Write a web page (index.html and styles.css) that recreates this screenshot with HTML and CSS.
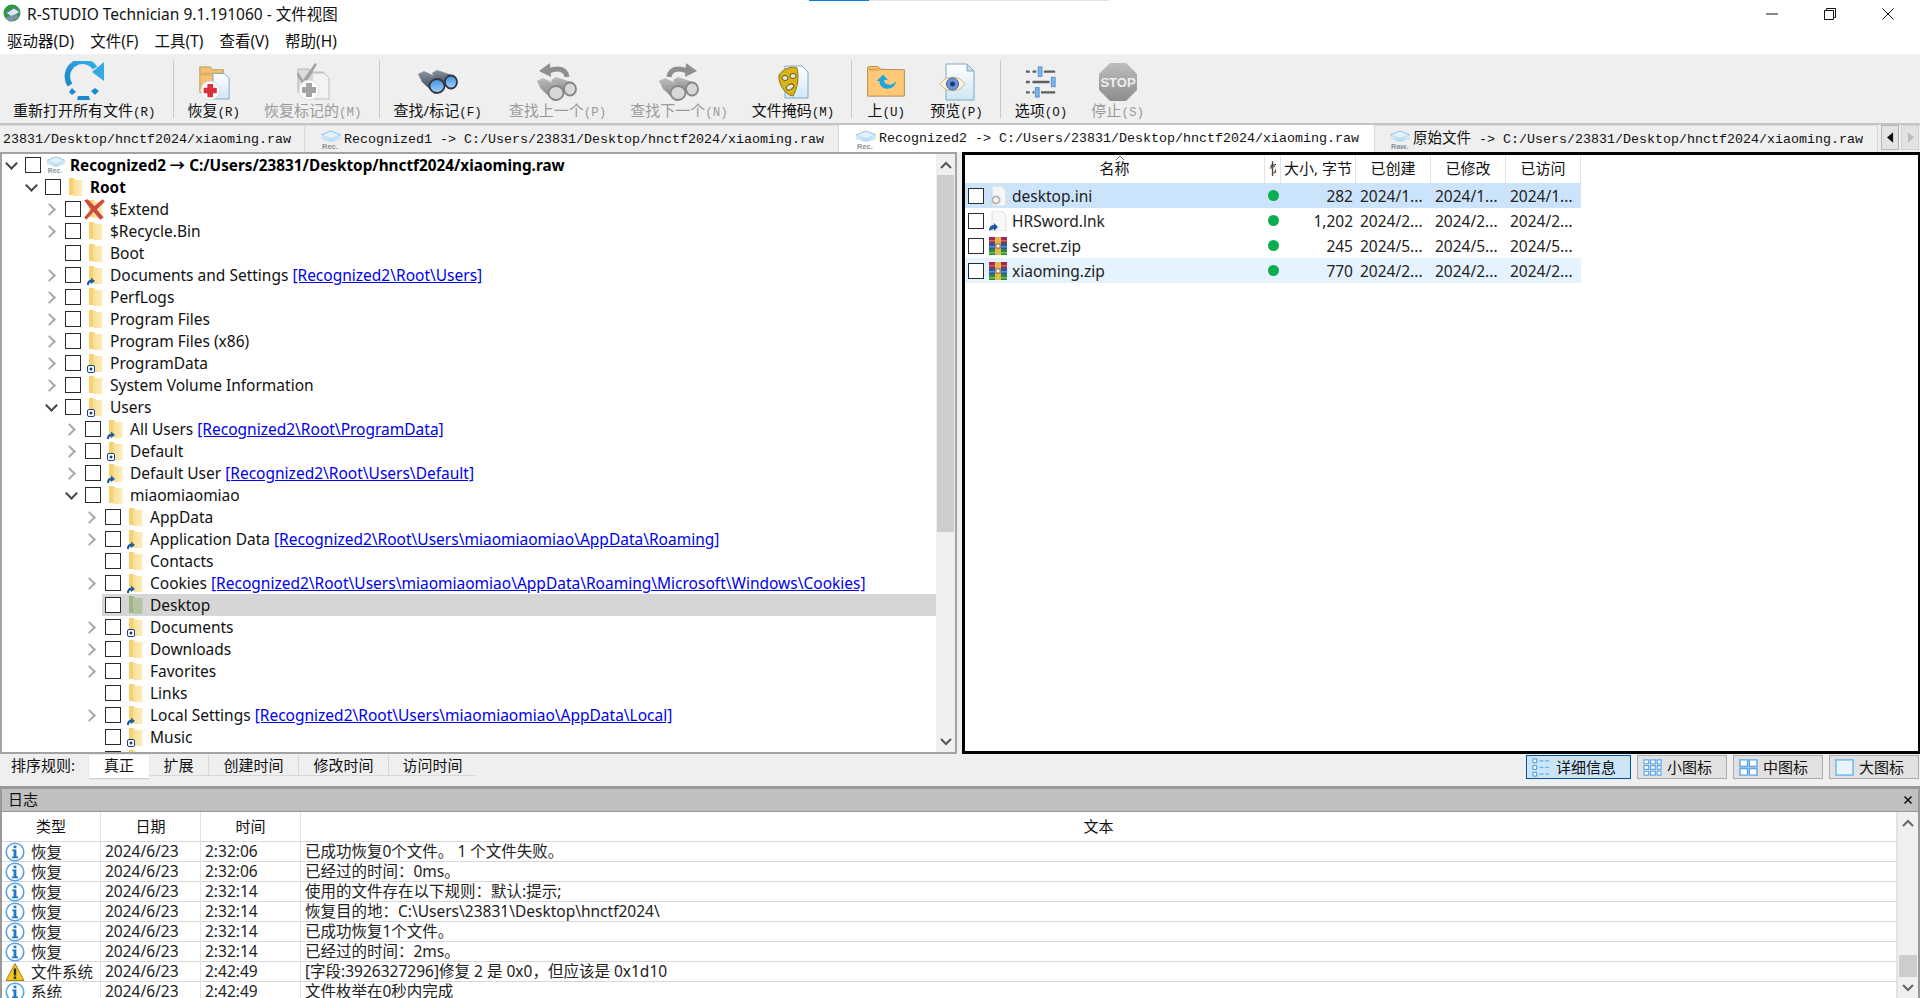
FILE: index.html
```html
<!DOCTYPE html>
<html lang="zh-CN">
<head>
<meta charset="utf-8">
<title>R-STUDIO Technician</title>
<link rel="stylesheet" href="styles.css">
</head>
<body>
<svg class="sprite" aria-hidden="true">
  <defs>
    <linearGradient id="gFolder" x1="0" y1="0" x2="1" y2="0"><stop offset="0" stop-color="#f8d67c"/><stop offset="1" stop-color="#fdeec0"/></linearGradient>
    <linearGradient id="gDoc" x1="0" y1="0" x2="0" y2="1"><stop offset="0" stop-color="#ffffff"/><stop offset="1" stop-color="#cfe6f5"/></linearGradient>
    <linearGradient id="gGrey" x1="0" y1="0" x2="0" y2="1"><stop offset="0" stop-color="#bdbdbd"/><stop offset="1" stop-color="#8d8d8d"/></linearGradient>
    <linearGradient id="gBlue" x1="0" y1="1" x2="1" y2="0"><stop offset="0" stop-color="#1a86c8"/><stop offset="1" stop-color="#35b0e8"/></linearGradient>
    <linearGradient id="gBarrel" x1="0" y1="0" x2="0" y2="1"><stop offset="0" stop-color="#8a96a3"/><stop offset="1" stop-color="#2f3844"/></linearGradient>
    <linearGradient id="gLens" x1="0" y1="0" x2="0" y2="1"><stop offset="0" stop-color="#3f8fe0"/><stop offset="1" stop-color="#a4d4fa"/></linearGradient>
    <linearGradient id="gBarrelG" x1="0" y1="0" x2="0" y2="1"><stop offset="0" stop-color="#bcbcbc"/><stop offset="1" stop-color="#7e7e7e"/></linearGradient>
    <linearGradient id="gDrive" x1="0" y1="0" x2="0" y2="1"><stop offset="0" stop-color="#e8f4fc"/><stop offset="1" stop-color="#a9d4f0"/></linearGradient>
    <symbol id="folder" viewBox="0 0 20 20"><path d="M3 1h5l2 2h6.500v16H8l-1-1H3z" fill="url(#gFolder)"/><path d="M3 1h4v17H3z" fill="#f6d170"/></symbol>
    <symbol id="folderGrey" viewBox="0 0 20 20"><path d="M3 1h5l2 2h6.500v16H8l-1-1H3z" fill="#b4c4a0"/><path d="M3 1h4v17H3z" fill="#a0b48c"/></symbol>
    <symbol id="link" viewBox="0 0 8 8"><path d="M0 8c0-3 1-5 4-5V.500l4 3.500-4 3V5.500C2 5.500 2 7 2 8z" fill="#1d5ba6"/></symbol>
    <symbol id="junction" viewBox="0 0 8 8"><rect x=".5" y=".5" width="7" height="7" rx="1.500" fill="#fff" stroke="#1d3f8f"/><circle cx="4" cy="4" r="1.500" fill="#1d3f8f"/></symbol>
    <symbol id="rec" viewBox="0 0 22 20"><path d="M1 5l10-4 10 4-10 4z" fill="#e4f2fc" stroke="#8cc3e8"/><path d="M1 5v4l10 3 10-3V5l-10 4z" fill="url(#gDrive)"/><text x="2" y="19" class="drive-txt">Rec.</text></symbol>
    <symbol id="raw" viewBox="0 0 22 20"><path d="M1 5l10-4 10 4-10 4z" fill="#e4f2fc" stroke="#8cc3e8"/><path d="M1 5v4l10 3 10-3V5l-10 4z" fill="url(#gDrive)"/><text x="2" y="19" class="drive-txt">Raw.</text></symbol>
    <symbol id="rar" viewBox="0 0 20 18"><rect x="1" y="0" width="18" height="6" fill="#a5255c"/><rect x="1" y="6" width="18" height="6" fill="#2c54a8"/><rect x="1" y="12" width="18" height="6" fill="#2d8a3a"/><rect x="1" y="3" width="18" height="1.500" fill="#d06a3f"/><rect x="1" y="9" width="18" height="1.500" fill="#5b8ae0"/><rect x="1" y="15" width="18" height="1.500" fill="#6fc05a"/><rect x="7" y="0" width="6" height="18" fill="#e2b94f"/><rect x="8" y="7" width="4" height="4" fill="#fff" stroke="#7a4a20" stroke-width=".8"/></symbol>
    <symbol id="info" viewBox="0 0 20 20"><circle cx="10" cy="10" r="8.800" fill="#fff" stroke="#5aa3e0" stroke-width="1.600"/><rect x="8.600" y="3.600" width="2.800" height="2.600" fill="#1f78c8"/><path d="M7.200 7.600h4.200v7h1.600v1.600H7v-1.600h1.600V9.200H7.200z" fill="#1f78c8"/></symbol>
    <symbol id="warn" viewBox="0 0 20 20"><path d="M10 1.500L19 18.500H1z" fill="#f4c520" stroke="#a8821a" stroke-linejoin="round"/><rect x="8.800" y="6.500" width="2.400" height="7" fill="#2a2a2a"/><rect x="8.800" y="14.500" width="2.400" height="2.400" fill="#2a2a2a"/></symbol>
    <symbol id="bino" viewBox="0 0 40 24"><path d="M14 3l5-3 18 6-6 12-12-6z" fill="url(#gBarrel)"/><ellipse cx="33" cy="12" rx="6" ry="6.500" fill="url(#gLens)" stroke="#2f3844" stroke-width="1.800"/><path d="M0 4l6-3 17 8-6 15L4 12z" fill="url(#gBarrel)"/><ellipse cx="19" cy="16" rx="7.500" ry="7" fill="url(#gLens)" stroke="#2f3844" stroke-width="1.800"/></symbol>
    <symbol id="binoGrey" viewBox="0 0 40 24"><path d="M14 3l5-3 18 6-6 12-12-6z" fill="url(#gBarrelG)"/><ellipse cx="33" cy="12" rx="6" ry="6.500" fill="#d8d8d8" stroke="#868686" stroke-width="1.800"/><path d="M0 4l6-3 17 8-6 15L4 12z" fill="url(#gBarrelG)"/><ellipse cx="19" cy="16" rx="7.500" ry="7" fill="#d8d8d8" stroke="#868686" stroke-width="1.800"/></symbol>
  </defs>
</svg>

<header class="titlebar">
  <svg class="app-icon" viewBox="0 0 20 20"><circle cx="10" cy="9" r="8.500" fill="#2f9a3f"/><path d="M4 9l8-5 6 4-8 5z" fill="#d8e8f4" stroke="#5b7a9a"/><path d="M3 14l11-4 3 3-9 5z" fill="#7f94a8"/></svg>
  <span class="title-text">R-STUDIO Technician 9.1.191060 - 文件视图</span>
  <div class="win-btns">
    <svg class="win-btn" viewBox="0 0 12 12"><path d="M0 6h12" stroke="#111"/></svg>
    <svg class="win-btn" viewBox="0 0 12 12"><path d="M.5 2.500h9v9h-9zM2.500 2.500v-2h9v9h-2" fill="none" stroke="#111"/></svg>
    <svg class="win-btn" viewBox="0 0 12 12"><path d="M.5.5l11 11M11.500.5l-11 11" stroke="#111"/></svg>
  </div>
  <div class="top-strip"><span class="strip-blue"></span></div>
</header>

<nav class="menubar">
  <span>驱动器(D)</span><span>文件(F)</span><span>工具(T)</span><span>查看(V)</span><span>帮助(H)</span>
</nav>

<div class="toolbar">
  <div class="tbtn">
    <svg class="ti ti-big" width="44" height="40" viewBox="0 2 44 40"><path d="M8 26A15 15 0 0 1 33 9" fill="none" stroke="url(#gBlue)" stroke-width="5.500"/><path d="M42 3v19L30 13z" fill="#35a8e4"/><path d="M10 29l4 4-4 3-3-3zM33 29l4 3-4 4-4-4zM16 37h11l1 4H15z" fill="#1c8ad0"/></svg>
    <span class="tl">重新打开所有文件<i>(R)</i></span>
  </div>
  <span class="tsep"></span>
  <div class="tbtn">
    <svg class="ti" width="34" height="35" viewBox="0 0 36 37"><path d="M3 2h11l2 3h12v24H3z" fill="#f2c271" stroke="#b99859"/><path d="M3 8h25v3H3z" fill="#e0b060"/><path d="M17 9h12l5 5v22H17z" fill="url(#gDoc)" stroke="#7fa8c4"/><circle cx="14" cy="27" r="10" fill="#fff" stroke="#cfd8dc"/><path d="M11 20h6v4h4v6h-4v4h-6v-4H7v-6h4z" fill="#d8323c"/></svg>
    <span class="tl">恢复<i>(R)</i></span>
  </div>
  <div class="tbtn off">
    <svg class="ti" width="36" height="38" viewBox="0 0 36 38"><path d="M3 6h11l2 3h12v20H3z" fill="#dcdcdc" stroke="#b5b5b5"/><path d="M3 9l5 8L20 0l2 1L9 24 2 12z" fill="#a2a2a2"/><path d="M17 10h12l5 5v21H17z" fill="#f3f3f3" stroke="#bdbdbd"/><circle cx="14" cy="27" r="10" fill="#fff" stroke="#dcdcdc"/><path d="M11 20h6v4h4v6h-4v4h-6v-4H7v-6h4z" fill="#a3a3a3"/></svg>
    <span class="tl">恢复标记的<i>(M)</i></span>
  </div>
  <span class="tsep"></span>
  <div class="tbtn">
    <svg class="ti" width="40" height="24" viewBox="0 0 40 24"><use href="#bino" width="40" height="24"/></svg>
    <span class="tl">查找/标记<i>(F)</i></span>
  </div>
  <div class="tbtn off tb-shift">
    <svg class="ti" width="40" height="38" viewBox="0 0 40 38"><path d="M30 14C29 6 21 4 12 8" fill="none" stroke="#8f8f8f" stroke-width="5"/><path d="M2 8l11-8 1 14z" fill="#8f8f8f"/><use href="#binoGrey" y="14" width="40" height="24"/></svg>
    <span class="tl">查找上一个<i>(P)</i></span>
  </div>
  <div class="tbtn off">
    <svg class="ti" width="40" height="38" viewBox="0 0 40 38"><path d="M10 14C11 6 19 4 28 8" fill="none" stroke="#8f8f8f" stroke-width="5"/><path d="M38 8L27 0l-1 14z" fill="#8f8f8f"/><use href="#binoGrey" y="14" width="40" height="24"/></svg>
    <span class="tl">查找下一个<i>(N)</i></span>
  </div>
  <div class="tbtn">
    <svg class="ti" width="34" height="34" viewBox="0 0 34 34"><path d="M9 1h17l6 6v26H9z" fill="url(#gDoc)" stroke="#7fa8c4"/><path d="M3 10C8 3 15 1 21 3c2 9 1 19-4 28C10 30 2 20 3 10z" fill="#d8b418" stroke="#8a7410"/><ellipse cx="9" cy="13" rx="3" ry="2.500" fill="#e6e6e6" stroke="#6a5a10"/><ellipse cx="17" cy="11" rx="3" ry="2.500" fill="#e6e6e6" stroke="#6a5a10"/><ellipse cx="14" cy="22" rx="4" ry="2.500" transform="rotate(-30 14 22)" fill="#e6e6e6" stroke="#6a5a10"/></svg>
    <span class="tl">文件掩码<i>(M)</i></span>
  </div>
  <span class="tsep"></span>
  <div class="tbtn">
    <svg class="ti" width="40" height="32" viewBox="0 0 40 34"><path d="M.5 2.500a2 2 0 0 1 2-2h9l3 3 25 .5v28H.5z" fill="#ffc877" stroke="#a9874f"/><path d="M2 2h11l2 3H1z" fill="#e9a95a"/><path d="M10 16l7-7 5 6h-4c0 3 2 5 6 5 3 0 5-2 7-4-1 6-6 9-12 8-4-1-6-4-6-8z" fill="#21a6dc"/></svg>
    <span class="tl">上<i>(U)</i></span>
  </div>
  <div class="tbtn">
    <svg class="ti" width="36" height="38" viewBox="0 0 36 38"><path d="M7 1h21l7 7v29H7z" fill="url(#gDoc)" stroke="#7fa8c4"/><path d="M28 1v7h7z" fill="#c9dce8" stroke="#7fa8c4"/><path d="M1 21c6-9 19-9 25 0-6 9-19 9-25 0z" fill="#f8f2de" stroke="#c9b886"/><circle cx="13.500" cy="21" r="6" fill="#6f95d8" stroke="#3f5f9f"/><circle cx="13.500" cy="21" r="2.500" fill="#1f3a78"/></svg>
    <span class="tl">预览<i>(P)</i></span>
  </div>
  <span class="tsep"></span>
  <div class="tbtn">
    <svg class="ti" width="36" height="32" viewBox="0 0 36 34"><path d="M2 6h4M9 6h4M21 6h12M2 17h4M9 17h18M2 28h4M9 28h2M18 28h15" stroke="#5f5f5f" stroke-width="2.500" fill="none"/><rect x="15" y="1" width="4" height="10" fill="#7cb8ef" stroke="#4f8fcc"/><rect x="29" y="12" width="4" height="10" fill="#7cb8ef" stroke="#4f8fcc"/><rect x="12" y="23" width="4" height="10" fill="#7cb8ef" stroke="#4f8fcc"/></svg>
    <span class="tl">选项<i>(O)</i></span>
  </div>
  <div class="tbtn off">
    <svg class="ti" width="38" height="38" viewBox="0 0 38 38"><path d="M11 0h16l11 11v16L27 38H11L0 27V11z" fill="url(#gGrey)"/><text x="19" y="24" class="stop-txt">STOP</text></svg>
    <span class="tl">停止<i>(S)</i></span>
  </div>
</div>

<div class="tabs">
  <div class="tab tab-a"><span class="tab-text">23831/Desktop/hnctf2024/xiaoming.raw</span></div>
  <div class="tab tab-b"><svg class="tab-ic"><use href="#rec"/></svg><span class="tab-text">Recognized1 -&gt; C:/Users/23831/Desktop/hnctf2024/xiaoming.raw</span></div>
  <div class="tab tab-c on"><svg class="tab-ic"><use href="#rec"/></svg><span class="tab-text">Recognized2 -&gt; C:/Users/23831/Desktop/hnctf2024/xiaoming.raw</span></div>
  <div class="tab tab-d"><svg class="tab-ic"><use href="#raw"/></svg><span class="tab-text"><b class="tab-cjk">原始文件</b> -&gt; C:/Users/23831/Desktop/hnctf2024/xiaoming.raw</span></div>
  <div class="tab-scroll"><span class="ts-btn"><svg viewBox="0 0 8 12" class="ts-ar"><path d="M7 0v12L0 6z" fill="#111"/></svg></span><span class="ts-btn dim"><svg viewBox="0 0 8 12" class="ts-ar"><path d="M1 0v12l7-6z" fill="#bbb"/></svg></span></div>
</div>

<div class="panes">
  <section class="tree-pane">
    <div class="tree">
      <div class="row l0 bold"><span class="tw down"></span><span class="cb"></span><svg class="ic"><use href="#rec"/></svg><span>Recognized2 → C:/Users/23831/Desktop/hnctf2024/xiaoming.raw</span></div>
      <div class="row l1 bold"><span class="tw down"></span><span class="cb"></span><svg class="ic"><use href="#folder"/></svg><span>Root</span></div>
      <div class="row l2"><span class="tw right"></span><span class="cb"></span><span class="icw"><svg class="ic"><use href="#folder"/></svg><svg class="xmark" viewBox="0 0 20 20"><path d="M1 2l3-1 6 6 7-6 2 2-7 7 6 7-3 2-6-7-6 7-2-2 6-7z" fill="#cc4a3e"/></svg></span><span>$Extend</span></div>
      <div class="row l2"><span class="tw right"></span><span class="cb"></span><svg class="ic"><use href="#folder"/></svg><span>$Recycle.Bin</span></div>
      <div class="row l2"><span class="tw"></span><span class="cb"></span><svg class="ic"><use href="#folder"/></svg><span>Boot</span></div>
      <div class="row l2"><span class="tw right"></span><span class="cb"></span><span class="icw"><svg class="ic"><use href="#folder"/></svg><svg class="ov"><use href="#link"/></svg></span><span>Documents and Settings</span><a class="lnk">[Recognized2\Root\Users]</a></div>
      <div class="row l2"><span class="tw right"></span><span class="cb"></span><svg class="ic"><use href="#folder"/></svg><span>PerfLogs</span></div>
      <div class="row l2"><span class="tw right"></span><span class="cb"></span><svg class="ic"><use href="#folder"/></svg><span>Program Files</span></div>
      <div class="row l2"><span class="tw right"></span><span class="cb"></span><svg class="ic"><use href="#folder"/></svg><span>Program Files (x86)</span></div>
      <div class="row l2"><span class="tw right"></span><span class="cb"></span><span class="icw"><svg class="ic"><use href="#folder"/></svg><svg class="ov"><use href="#junction"/></svg></span><span>ProgramData</span></div>
      <div class="row l2"><span class="tw right"></span><span class="cb"></span><svg class="ic"><use href="#folder"/></svg><span>System Volume Information</span></div>
      <div class="row l2"><span class="tw down"></span><span class="cb"></span><span class="icw"><svg class="ic"><use href="#folder"/></svg><svg class="ov"><use href="#junction"/></svg></span><span>Users</span></div>
      <div class="row l3"><span class="tw right"></span><span class="cb"></span><span class="icw"><svg class="ic"><use href="#folder"/></svg><svg class="ov"><use href="#link"/></svg></span><span>All Users</span><a class="lnk">[Recognized2\Root\ProgramData]</a></div>
      <div class="row l3"><span class="tw right"></span><span class="cb"></span><span class="icw"><svg class="ic"><use href="#folder"/></svg><svg class="ov"><use href="#junction"/></svg></span><span>Default</span></div>
      <div class="row l3"><span class="tw right"></span><span class="cb"></span><span class="icw"><svg class="ic"><use href="#folder"/></svg><svg class="ov"><use href="#link"/></svg></span><span>Default User</span><a class="lnk">[Recognized2\Root\Users\Default]</a></div>
      <div class="row l3"><span class="tw down"></span><span class="cb"></span><svg class="ic"><use href="#folder"/></svg><span>miaomiaomiao</span></div>
      <div class="row l4"><span class="tw right"></span><span class="cb"></span><svg class="ic"><use href="#folder"/></svg><span>AppData</span></div>
      <div class="row l4"><span class="tw right"></span><span class="cb"></span><span class="icw"><svg class="ic"><use href="#folder"/></svg><svg class="ov"><use href="#link"/></svg></span><span>Application Data</span><a class="lnk">[Recognized2\Root\Users\miaomiaomiao\AppData\Roaming]</a></div>
      <div class="row l4"><span class="tw"></span><span class="cb"></span><svg class="ic"><use href="#folder"/></svg><span>Contacts</span></div>
      <div class="row l4"><span class="tw right"></span><span class="cb"></span><span class="icw"><svg class="ic"><use href="#folder"/></svg><svg class="ov"><use href="#link"/></svg></span><span>Cookies</span><a class="lnk">[Recognized2\Root\Users\miaomiaomiao\AppData\Roaming\Microsoft\Windows\Cookies]</a></div>
      <div class="row l4 sel"><span class="cb"></span><svg class="ic"><use href="#folderGrey"/></svg><span>Desktop</span></div>
      <div class="row l4"><span class="tw right"></span><span class="cb"></span><span class="icw"><svg class="ic"><use href="#folder"/></svg><svg class="ov"><use href="#junction"/></svg></span><span>Documents</span></div>
      <div class="row l4"><span class="tw right"></span><span class="cb"></span><svg class="ic"><use href="#folder"/></svg><span>Downloads</span></div>
      <div class="row l4"><span class="tw right"></span><span class="cb"></span><svg class="ic"><use href="#folder"/></svg><span>Favorites</span></div>
      <div class="row l4"><span class="tw"></span><span class="cb"></span><svg class="ic"><use href="#folder"/></svg><span>Links</span></div>
      <div class="row l4"><span class="tw right"></span><span class="cb"></span><span class="icw"><svg class="ic"><use href="#folder"/></svg><svg class="ov"><use href="#link"/></svg></span><span>Local Settings</span><a class="lnk">[Recognized2\Root\Users\miaomiaomiao\AppData\Local]</a></div>
      <div class="row l4"><span class="tw"></span><span class="cb"></span><span class="icw"><svg class="ic"><use href="#folder"/></svg><svg class="ov"><use href="#junction"/></svg></span><span>Music</span></div>
      <div class="row l4"><span class="tw"></span><span class="cb"></span><svg class="ic"><use href="#folder"/></svg></div>
    </div>
    <div class="vscroll tree-sb">
      <span class="sb-ar"><svg viewBox="0 0 12 8" class="sb-ic"><path d="M1 7l5-5 5 5" fill="none" stroke="#555" stroke-width="2"/></svg></span>
      <div class="sb-track"><div class="sb-thumb"></div></div>
      <span class="sb-ar"><svg viewBox="0 0 12 8" class="sb-ic"><path d="M1 1l5 5 5-5" fill="none" stroke="#555" stroke-width="2"/></svg></span>
    </div>
  </section>
  <section class="list-pane">
    <div class="lhead">
      <span class="lh c-name">名称<svg class="caret" viewBox="0 0 10 5"><path d="M1 5l4-4 4 4" fill="none" stroke="#777"/></svg></span>
      <span class="lh c-st"><span class="st-clip">恢</span></span>
      <span class="lh c-sz">大小, 字节</span>
      <span class="lh c-d">已创建</span>
      <span class="lh c-d">已修改</span>
      <span class="lh c-d">已访问</span>
    </div>
    <div class="lrow sel1">
      <span class="c-name cell-name"><span class="cb"></span><svg class="fic tall" viewBox="0 0 20 20"><path d="M4 0h10l4 4v16H4z" fill="#f6f6f6" stroke="#d5d5d5"/><circle cx="8" cy="14" r="3.500" fill="none" stroke="#b8b8b8" stroke-width="2"/></svg>desktop.ini</span>
      <span class="c-st"><span class="dot"></span></span><span class="c-sz num">282</span><span class="c-d dt">2024/1...</span><span class="c-d dt">2024/1...</span><span class="c-d dt">2024/1...</span>
    </div>
    <div class="lrow">
      <span class="c-name cell-name"><span class="cb"></span><svg class="fic tall" viewBox="0 0 20 20"><path d="M4 0h10l4 4v16H4z" fill="#f8f8f8" stroke="#dcdcdc"/><path d="M1 20c0-4 2-6 5-6v-2l4 4-4 4v-2c-2 0-3 1-5 2z" fill="#1d5ba6"/></svg>HRSword.lnk</span>
      <span class="c-st"><span class="dot"></span></span><span class="c-sz num">1,202</span><span class="c-d dt">2024/2...</span><span class="c-d dt">2024/2...</span><span class="c-d dt">2024/2...</span>
    </div>
    <div class="lrow">
      <span class="c-name cell-name"><span class="cb"></span><svg class="fic"><use href="#rar"/></svg>secret.zip</span>
      <span class="c-st"><span class="dot"></span></span><span class="c-sz num">245</span><span class="c-d dt">2024/5...</span><span class="c-d dt">2024/5...</span><span class="c-d dt">2024/5...</span>
    </div>
    <div class="lrow sel2">
      <span class="c-name cell-name"><span class="cb"></span><svg class="fic"><use href="#rar"/></svg>xiaoming.zip</span>
      <span class="c-st"><span class="dot"></span></span><span class="c-sz num">770</span><span class="c-d dt">2024/2...</span><span class="c-d dt">2024/2...</span><span class="c-d dt">2024/2...</span>
    </div>
  </section>
</div>

<div class="sortbar">
  <span class="sort-label">排序规则:</span>
  <div class="sort-tabs">
    <span class="st st-on">真正</span><span class="st st-s">扩展</span><span class="st">创建时间</span><span class="st">修改时间</span><span class="st st-last">访问时间</span>
  </div>
  <div class="views">
    <span class="vb vb-on"><svg class="vi" viewBox="0 0 20 20"><path d="M1 1h4v4H1zM1 8h4v4H1zM1 15h4v4H1z" fill="#fff" stroke="#2f8fdc"/><path d="M8 3h4M14 3h4M8 10h4M14 10h4M8 17h4M14 17h4" stroke="#59aef2" stroke-width="1.300"/></svg>详细信息</span>
    <span class="vb"><svg class="vi" viewBox="0 0 20 20"><path d="M1 2h5v4H1zM8 2h5v4H8zM15 2h4v4h-4zM1 8h5v4H1zM8 8h5v4H8zM15 8h4v4h-4zM1 14h5v4H1zM8 14h5v4H8zM15 14h4v4h-4z" fill="#fff" stroke="#59a6ee" stroke-width="1.200"/></svg>小图标</span>
    <span class="vb"><svg class="vi" viewBox="0 0 20 20"><path d="M1 2h8v7H1zM11 2h8v7h-8zM1 11h8v7H1zM11 11h8v7h-8z" fill="#fff" stroke="#59a6ee" stroke-width="1.500"/></svg>中图标</span>
    <span class="vb"><svg class="vi" viewBox="0 0 20 20"><rect x="1" y="2" width="18" height="16" fill="#eaf4fd" stroke="#6cb2f2" stroke-width="1.500"/></svg>大图标</span>
  </div>
</div>

<section class="log">
  <div class="log-title"><span>日志</span><svg class="log-x" viewBox="0 0 8 8"><path d="M.5.5l7 7M7.500.5l-7 7" stroke="#111" stroke-width="1.500"/></svg></div>
  <div class="log-body">
    <div class="log-table">
      <div class="lg-head"><span>类型</span><span>日期</span><span>时间</span><span>文本</span></div>
      <div class="lg-row"><span class="lg-type"><svg class="lg-ic"><use href="#info"/></svg>恢复</span><span>2024/6/23</span><span>2:32:06</span><span>已成功恢复0个文件。 1 个文件失败。</span></div>
      <div class="lg-row"><span class="lg-type"><svg class="lg-ic"><use href="#info"/></svg>恢复</span><span>2024/6/23</span><span>2:32:06</span><span>已经过的时间：0ms。</span></div>
      <div class="lg-row"><span class="lg-type"><svg class="lg-ic"><use href="#info"/></svg>恢复</span><span>2024/6/23</span><span>2:32:14</span><span>使用的文件存在以下规则：默认:提示;</span></div>
      <div class="lg-row"><span class="lg-type"><svg class="lg-ic"><use href="#info"/></svg>恢复</span><span>2024/6/23</span><span>2:32:14</span><span>恢复目的地：C:\Users\23831\Desktop\hnctf2024\</span></div>
      <div class="lg-row"><span class="lg-type"><svg class="lg-ic"><use href="#info"/></svg>恢复</span><span>2024/6/23</span><span>2:32:14</span><span>已成功恢复1个文件。</span></div>
      <div class="lg-row"><span class="lg-type"><svg class="lg-ic"><use href="#info"/></svg>恢复</span><span>2024/6/23</span><span>2:32:14</span><span>已经过的时间：2ms。</span></div>
      <div class="lg-row"><span class="lg-type"><svg class="lg-ic"><use href="#warn"/></svg>文件系统</span><span>2024/6/23</span><span>2:42:49</span><span>[字段:3926327296]修复 2 是 0x0，但应该是 0x1d10</span></div>
      <div class="lg-row"><span class="lg-type"><svg class="lg-ic"><use href="#info"/></svg>系统</span><span>2024/6/23</span><span>2:42:49</span><span>文件枚举在0秒内完成</span></div>
    </div>
    <div class="vscroll log-sb">
      <span class="sb-ar"><svg viewBox="0 0 12 8" class="sb-ic"><path d="M1 7l5-5 5 5" fill="none" stroke="#666" stroke-width="2"/></svg></span>
      <div class="sb-track"><div class="sb-thumb"></div></div>
      <span class="sb-ar"><svg viewBox="0 0 12 8" class="sb-ic"><path d="M1 1l5 5 5-5" fill="none" stroke="#666" stroke-width="2"/></svg></span>
    </div>
  </div>
</section>
</body>
</html>
```

FILE: styles.css
```css
* { box-sizing: border-box; }
html, body { margin: 0; padding: 0; width: 1920px; height: 998px; overflow: hidden; background: #fff; }
body {
  display: flex; flex-direction: column;
  font-family: "Noto Sans", "Noto Sans CJK SC", sans-serif;
  font-size: 15px; color: #111;
}
.sprite { width: 0; height: 0; position: absolute; }
.drive-txt { font: 700 7.500px "Liberation Sans", sans-serif; fill: #8b9298; }
.stop-txt { font: 700 13px "Liberation Sans", sans-serif; fill: #eee; text-anchor: middle; }

/* title + menu */
.titlebar { height: 27px; flex: none; display: flex; align-items: center; padding-left: 2px; position: relative; }
.app-icon { width: 20px; height: 20px; margin-right: 5px; }
.title-text { font-size: 15.500px; }
.win-btns { margin-left: auto; display: flex; gap: 46px; margin-right: 26px; }
.win-btn { width: 12px; height: 12px; }
.top-strip { position: absolute; left: 809px; top: 0; width: 300px; height: 1px; background: #e3e3e3; }
.strip-blue { display: block; width: 60px; height: 1px; background: #0a7cd8; }
.menubar { height: 28px; flex: none; display: flex; align-items: center; gap: 16px; padding: 0 0 0 7px; border-bottom: 1px solid #f0f0f0; font-size: 15.500px; }

/* toolbar */
.toolbar { height: 70px; flex: none; background: #efefef; display: flex; padding-left: 1px; border-bottom: 2px solid #c4c4c4; }
.tbtn { display: flex; flex-direction: column; align-items: center; padding: 8px 12px 4px; color: #111; height: 68px; }
.tbtn.off { color: #9a9a9a; }
.tb-shift { margin-left: 3px; }
.ti { flex: none; margin: auto 0; }
.ti-big { margin: -2px 0 0; }
.tl { display: block; height: 18px; font-size: 15px; line-height: 18px; white-space: nowrap; flex: none; }
.tl i { font-family: "Liberation Mono", monospace; font-style: normal; font-size: 12.500px; }
.tsep { width: 1px; height: 58px; margin: 5px 2px 0 5px; background: #c9c9c9; flex: none; }

/* tabs */
.tabs { height: 27px; flex: none; display: flex; background: #efefef; font-family: "Liberation Mono", "Noto Sans CJK SC", monospace; font-size: 13.330px; }
.tab { display: flex; align-items: center; height: 27px; border-right: 1px solid #d8d8d8; border-top: 1px solid #dedede; overflow: hidden; flex: none; white-space: nowrap; }
.tab-a { width: 305px; padding-left: 3px; }
.tab-b { width: 534px; padding-left: 15px; }
.tab-c { width: 536px; padding-left: 16px; background: #fff; border-top: 0; }
.tab-d { width: 503px; padding-left: 14px; }
.tab-ic { width: 22px; height: 20px; flex: none; margin: 2px 2px 0 0; }
.tab-cjk { font: 400 14.500px/0 "Noto Sans CJK SC", sans-serif; }
.tab-scroll { display: flex; gap: 2px; margin-left: 3px; }
.ts-btn { width: 18px; height: 25px; background: #e4e4e4; border: 1px solid #b5b5b5; display: flex; align-items: center; justify-content: center; }
.ts-btn.dim { border-color: #d2d2d2; background: #e2e2e2; }
.ts-ar { width: 7px; height: 11px; }

/* panes */
.panes { height: 602px; flex: none; display: flex; background: #efefef; }
.tree-pane { width: 957px; flex: none; display: flex; border: 2px solid #a3a3a3; background: #fff; overflow: hidden; }
.tree { flex: 1; min-width: 0; overflow: hidden; }
.row { height: 22px; display: flex; align-items: center; white-space: nowrap; font-size: 15.500px; line-height: 20px; color: #111; }
.row.bold { font-weight: 700; font-size: 15.300px; color: #000; }
.l0 { padding-left: 3px; }
.l1 { padding-left: 23px; }
.l2 { padding-left: 43px; }
.l3 { padding-left: 63px; }
.l4 { padding-left: 83px; }
.row.sel { background: #d6d6d6; margin-left: 100px; padding-left: 3px; }
.tw { width: 12px; height: 12px; flex: none; margin-right: 8px; position: relative; }
.tw.down::after, .tw.right::after { content: ""; position: absolute; left: 2px; top: 2px; width: 7px; height: 7px; border-right: 2px solid #666; border-bottom: 2px solid #666; }
.tw.down::after { transform: rotate(45deg); border-color: #444; top: 0; }
.tw.right::after { transform: rotate(-45deg); border-color: #a8a8a8; left: 0; }
.cb { width: 16px; height: 16px; flex: none; border: 1px solid #2a2a2a; background: #fff; }
.ic { width: 20px; height: 20px; flex: none; margin: 0 4px 0 5px; }
.icw { width: 20px; height: 20px; flex: none; margin: 0 4px 0 5px; position: relative; display: block; }
.icw .ic { margin: 0; }
.ov { position: absolute; left: 1px; bottom: 0; width: 8px; height: 8px; }
.xmark { position: absolute; left: -3px; top: -1px; width: 23px; height: 23px; }
.lnk { color: #0000ee; text-decoration: underline; margin-left: 4px; }
.vscroll { width: 19px; flex: none; display: flex; flex-direction: column; background: #f0f0f0; }
.sb-ar { height: 21px; flex: none; display: flex; align-items: center; justify-content: center; }
.sb-ic { width: 12px; height: 8px; }
.sb-track { flex: 1; display: flex; flex-direction: column; padding: 0 1px; }
.tree-sb .sb-thumb { height: 357px; background: #cdcdcd; }
.log-sb .sb-track { justify-content: flex-end; }
.log-sb .sb-thumb { height: 22px; background: #cdcdcd; }

.list-pane { width: 958px; margin-left: 5px; flex: none; border: 3px solid #000; border-right-width: 2px; background: #fff; overflow: hidden; }
.lhead { display: flex; height: 28px; align-items: center; }
.lh { height: 28px; display: flex; align-items: center; justify-content: center; border-right: 1px solid #e3e3e3; white-space: nowrap; overflow: hidden; position: relative; padding-bottom: 4px; }
.st-clip { display: block; width: 6px; overflow: hidden; flex: none; }
.caret { position: absolute; left: 150px; top: 0; width: 10px; height: 5px; }
.lrow { display: flex; height: 25px; width: 616px; align-items: center; font-size: 15.500px; color: #222; white-space: nowrap; }
.sel1 { background: #cce4fb; }
.sel2 { background: #e5f3ff; }
.c-name { width: 300px; flex: none; }
.c-st { width: 16px; flex: none; overflow: hidden; }
.c-sz { width: 75px; flex: none; }
.c-d { width: 75px; flex: none; }
.cell-name { display: flex; align-items: center; padding-left: 3px; }
.fic { width: 20px; height: 18px; flex: none; margin: 0 4px; }
.fic.tall { height: 20px; }
.dot { display: block; width: 11px; height: 11px; border-radius: 50%; background: #0cad4e; margin-left: 3px; }
.num { text-align: right; padding-right: 3px; }
.dt { padding-left: 4px; overflow: hidden; }

/* sort + views */
.sortbar { height: 32px; flex: none; background: #efefef; display: flex; align-items: flex-start; padding-top: 1px; }
.sort-label { padding-left: 11px; width: 89px; line-height: 21px; flex: none; }
.sort-tabs { display: flex; border-bottom: 1px solid #d8d8d8; height: 21px; }
.st { width: 90px; text-align: center; line-height: 20px; border-right: 1px solid #d8d8d8; height: 20px; }
.st-s { width: 60px; }
.st-last { width: 87px; border-right: 0; }
.st-on { width: 60px; background: #fff; height: 23px; border: 0; box-shadow: 0 1px 1px #cfcfcf; }
.views { margin-left: auto; display: flex; gap: 6px; padding-right: 1px; }
.vb { width: 90px; height: 24px; background: #e1e1e1; border: 1px solid #adadad; display: flex; align-items: center; padding: 0 0 2px 5px; gap: 5px; font-size: 15px; }
.vi { width: 19px; height: 19px; flex: none; position: relative; top: 1px; }
.vb-on { width: 105px; background: #cce4f7; border-color: #005499; }

/* log */
.log { flex: 1; min-height: 0; display: flex; flex-direction: column; border: 2px solid #999; border-bottom: 0; border-top-width: 3px; overflow: hidden; }
.log-title { height: 23px; flex: none; background: #c0c0c0; border-bottom: 1px solid #999; display: flex; align-items: center; justify-content: space-between; padding: 0 6px 4px; }
.log-x { width: 8px; height: 8px; position: relative; top: 2px; }
.log-body { flex: 1; min-height: 0; display: flex; background: #fff; }
.log-table { flex: 1; min-width: 0; overflow: hidden; }
.lg-head, .lg-row { display: grid; grid-template-columns: 99px 100px 100px 1fr; border-bottom: 1px solid #d8d8d8; }
.lg-head { height: 30px; }
.lg-head span { text-align: center; line-height: 29px; border-right: 1px solid #e3e3e3; }
.lg-row { height: 20px; font-size: 15.500px; line-height: 19px; color: #222; white-space: nowrap; }
.lg-row span { padding-left: 4px; border-right: 1px solid #e3e3e3; }
.lg-row span.lg-type { padding-left: 3px; display: flex; align-items: center; gap: 6px; }
.lg-ic { width: 20px; height: 20px; flex: none; }
.log-sb { width: 21px; border-left: 1px solid #e3e3e3; }
```
